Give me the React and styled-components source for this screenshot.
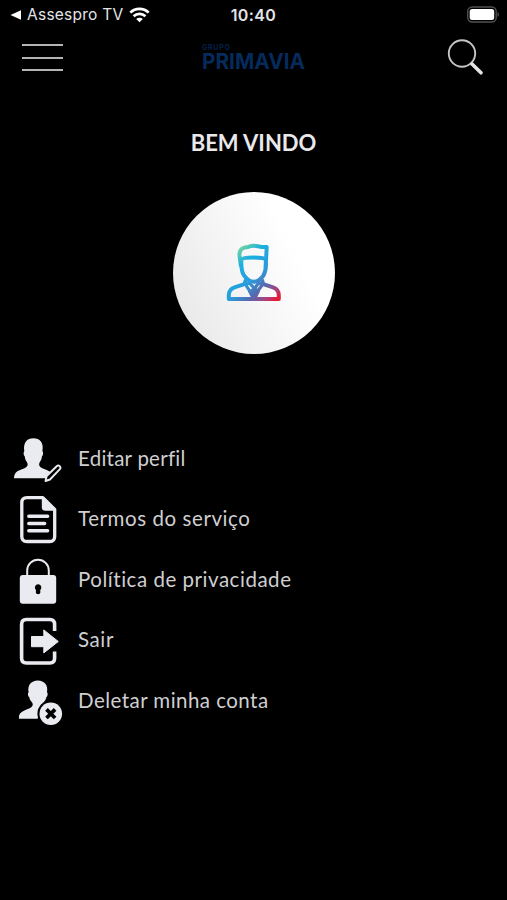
import React from 'react'
import styled, { createGlobalStyle } from 'styled-components'

const GlobalStyle = createGlobalStyle`
    body {
        margin: 0;
        background: #000;
    }
`;

const Screen = styled.div`
    width: 507px;
    height: 900px;
    overflow: hidden;
    display: flex;
    flex-direction: column;
    background: #000;
    color: #cfcfd1;
    font-family: Lato, "Open Sans", sans-serif;
`;

const StatusBar = styled.div`
    height: 30px;
    display: grid;
    grid-template-columns: 1fr 60px 1fr;
    align-items: center;
    box-sizing: border-box;
    padding: 0 8px 0 10px;
    font-family: Inter, sans-serif;
    color: #e4e4e6;
`;

const BackTo = styled.div`
    display: flex;
    align-items: center;
    font-size: 15.5px;
    line-height: 30px;
    letter-spacing: 0.25px;

    span {
        width: 97px;
        margin: 0 5px 0 6px;
        white-space: nowrap;
    }
`;

const Clock = styled.div`
    margin-left: -2px;
    font-size: 16px;
    font-weight: 600;
    line-height: 30px;
    text-align: center;
    letter-spacing: 0.4px;
    white-space: nowrap;
`;

const BatteryIcon = styled.svg`
    justify-self: end;
`;

const Header = styled.header`
    height: 60px;
    display: grid;
    grid-template-columns: 180px 1fr 38px;
    align-items: start;
    box-sizing: border-box;
    padding: 8px 22px 0;
`;

const MenuButton = styled.div`
    width: 41px;
    height: 27px;
    margin-top: 6px;
    display: flex;
    flex-direction: column;
    justify-content: space-between;
`;

const MenuLine = styled.div`
    height: 2px;
    background: #b4b4b4;
`;

const Logo = styled.div`
    width: 104px;
    margin-top: 6px;
    color: #052b5c;
`;

const LogoTop = styled.div`
    height: 8px;
    font: 700 7px/8px Inter, sans-serif;
    letter-spacing: 0.75px;
    opacity: 0.8;
`;

const LogoName = styled.svg`
    display: block;
    overflow: visible;
`;

const Title = styled.h1`
    height: 28px;
    margin: 39px 0 0;
    font-size: 22px;
    font-weight: 700;
    line-height: 28px;
    text-align: center;
    color: #e9e9ec;
`;

const Avatar = styled.div`
    width: 162px;
    height: 162px;
    margin: 35px 0 0 173px;
    border-radius: 50%;
    display: flex;
    align-items: center;
    justify-content: center;
    background: linear-gradient(65deg, #e5e5e5 0%, #f4f4f4 40%, #fff 72%);
`;

const Menu = styled.ul`
    margin: 75px 0 0;
    padding: 0;
    list-style: none;
`;

const MenuItem = styled.li`
    height: 60.5px;
    display: flex;
    align-items: center;
    padding-left: 10px;
`;

const Label = styled.span`
    margin-left: 8px;
    padding-bottom: 3px;
    font-size: 20.5px;
    line-height: 28px;
    letter-spacing: ${props => props.$spacing}px;
    white-space: nowrap;
`;

const ItemIcon = styled.svg`
    width: 60px;
    height: 60px;
    flex: none;
    color: #e9ebf1;
`;

function EditIcon() {
    return (
        <ItemIcon viewBox="0 0 60 60">
            <path fill="currentColor" d="M4 49.300C4 42 9.500 41.300 14.500 39.200c3.200-1.400 4-3.500 2.400-6.200-1.300-1.400-2-3.400-2.100-5.500-1.500-1-1.500-4.500-.5-5.500C13 13.500 17 9.200 23.400 9.200S34 13.500 32.400 22c1 1 1 4.500-.5 5.500-.1 2.100-.8 4.100-2.100 5.500-1.500 2.700-.7 4.800 2.500 6.200 3.400 1.500 6.800 2.400 9.200 4.700l-5.500 5.400z" />
            <path fill="#000" stroke="currentColor" strokeWidth="1.900" strokeLinejoin="round" d="M35.500 52l1.200-5 10-9.800q1.600-1.400 3 0t.2 3L40 50.500z" />
        </ItemIcon>
    )
}

function TermsIcon() {
    return (
        <ItemIcon viewBox="0 0 60 60">
            <path fill="none" stroke="currentColor" strokeWidth="3.300" strokeLinejoin="round" d="M17 7.600h15.800L44.700 19.500V46.500q0 5-5 5H16.800q-5 0-5-5V12.600q0-5 5.200-5z" />
            <path fill="currentColor" d="M31.800 7.600h1.500l11.400 11.900v1.200h-9.500q-3.400 0-3.400-3.400z" />
            <path stroke="currentColor" strokeWidth="3.500" strokeLinecap="round" d="M18.800 26.300h18.800M18.800 33.400h15.800M18.800 40.700h18.800" />
        </ItemIcon>
    )
}

function LockIcon() {
    return (
        <ItemIcon viewBox="0 0 60 60">
            <path fill="none" stroke="currentColor" strokeWidth="2" d="M17.200 27V20.500a10.800 10.800 0 0 1 21.600 0V27" />
            <rect x="9.800" y="25" width="36.400" height="28.800" rx="3" fill="currentColor" />
            <path fill="#000" d="M28.100 34.200a3.300 3.300 0 0 1 2.200 5.700v2.900q0 1.400-2.200 1.400t-2.200-1.400v-2.900a3.300 3.300 0 0 1 2.200-5.700z" />
        </ItemIcon>
    )
}

function ExitIcon() {
    return (
        <ItemIcon viewBox="0 0 60 60">
            <path fill="none" stroke="currentColor" strokeWidth="3.600" d="M44.600 20V13.200q0-4.700-4.700-4.700H16.300q-4.700 0-4.700 4.700V47.300q0 4.700 4.700 4.700H39.900q4.700 0 4.700-4.700V40.500" />
            <path fill="currentColor" stroke="currentColor" strokeWidth="1" strokeLinejoin="round" d="M21.500 25.500h12.300v-6.600L48.300 30.500 33.800 41.900v-6.200H21.500z" />
        </ItemIcon>
    )
}

function DeleteIcon() {
    return (
        <ItemIcon viewBox="0 1 60 60">
            <path fill="currentColor" d="M9 48.700C8.500 42.500 12 41.500 19 38.500c3.500-1.500 5.200-4 2.300-7-1.200-1.400-1.700-2.600-2-4.200-1.600-1-1.700-4-.7-5.200C17.300 15.500 21 10.500 27.800 10.500S38.300 15.500 37 22.100c1 1.200.9 4.200-.7 5.200-.3 1.600-.8 2.800-2 4.200-1.300 1.700-1.500 2.500-.5 4L27.500 48.700z" />
            <circle cx="40.800" cy="43.700" r="13.400" fill="#000" />
            <circle cx="40.800" cy="43.700" r="11.300" fill="currentColor" />
            <path stroke="#000" strokeWidth="3.700" d="M36.500 39.400l8.600 8.600m0-8.600l-8.600 8.600" />
        </ItemIcon>
    )
}

function UserIcon() {
    return (
        <svg width="80" height="75" viewBox="-1 0.5 80 75">
            <defs>
                <linearGradient id="user" gradientUnits="userSpaceOnUse" x1="21" y1="14" x2="65" y2="64">
                    <stop offset="0" stopColor="#78d69b" />
                    <stop offset="0.22" stopColor="#1bb0df" />
                    <stop offset="0.5" stopColor="#2b9bdc" />
                    <stop offset="0.7" stopColor="#5769ae" />
                    <stop offset="0.86" stopColor="#ad3f7c" />
                    <stop offset="0.96" stopColor="#e51b38" />
                </linearGradient>
            </defs>
            <g fill="none" stroke="url(#user)" strokeWidth="4" strokeLinejoin="round">
                <path d="M26 31L24.500 20q-.8-8 8.500-8.500 4-1.800 10-.8 5 1.200 8.700.8l-1 19.500" />
                <path d="M26 24.500q1.500-2.400 12.500-2.400T51.500 24.500" />
                <path d="M26.300 25.500q-.3 10 2.700 14.500Q34 46.300 38.700 46.300t9.600-6.100q3.200-5.500 2.500-14.700" />
                <path d="M31 44l-1.600 4.600-9.900 3.200q-5.700 2-5.700 8v3.700h50v-3.700q0-6-5.700-8L48.300 48.600 46.700 44" />
                <path strokeWidth="3.200" d="M30.500 49l9 14M47.500 49L38 62M30.500 49l4-1.500 5 5.500 4-5.500 4 1.500" />
            </g>
            <path fill="url(#user)" d="M35.500 54l4-3 4 3 1.500 2-4 8h-4l-4-8z" />
        </svg>
    )
}

const items = [
    { text: 'Editar perfil', icon: EditIcon, spacing: 0.25 },
    { text: 'Termos do serviço', icon: TermsIcon, spacing: 0.57 },
    { text: 'Política de privacidade', icon: LockIcon, spacing: 0.53 },
    { text: 'Sair', icon: ExitIcon, spacing: 0.6 },
    { text: 'Deletar minha conta', icon: DeleteIcon, spacing: 0.46 },
]

export default function App() {
    return (
        <>
            <GlobalStyle />
            <Screen>
                <StatusBar>
                    <BackTo>
                        <svg width="11" height="10" viewBox="0 0 11 10">
                            <path fill="#fff" d="M.5 5L11 .2v9.600z" />
                        </svg>
                        <span>Assespro TV</span>
                        <svg width="21" height="16" viewBox="0 0 21 16">
                            <g fill="none" stroke="#fff" strokeWidth="2.700">
                                <path d="M1.300 5.600a13 13 0 0 1 18.400 0" />
                                <path d="M4.600 9.200a8.400 8.400 0 0 1 11.800 0" />
                            </g>
                            <path fill="#fff" d="M10.500 15.300L7.200 12a4.700 4.700 0 0 1 6.600 0z" />
                        </svg>
                    </BackTo>
                    <Clock>10:40</Clock>
                    <BatteryIcon width="33" height="18" viewBox="0 0 33 18">
                        <rect x="1.700" y="1" width="28.500" height="15" rx="4.500" fill="none" stroke="#505050" strokeWidth="1.400" />
                        <rect x="3.700" y="3" width="24.500" height="11" rx="2.500" fill="#fff" />
                        <path fill="#505050" d="M31.500 6q1.500.8 1.500 2.500T31.500 11z" />
                    </BatteryIcon>
                </StatusBar>
                <Header>
                    <MenuButton>
                        <MenuLine />
                        <MenuLine />
                        <MenuLine />
                    </MenuButton>
                    <Logo>
                        <LogoTop>GRUPO</LogoTop>
                        <LogoName width="104" height="18" viewBox="0 0 104 18">
                            <text x="0" y="17" fill="currentColor" fontFamily="Inter, sans-serif" fontSize="21.500" fontWeight="700" textLength="103" lengthAdjust="spacingAndGlyphs">PRIMAVIA</text>
                        </LogoName>
                    </Logo>
                    <svg width="38" height="40" viewBox="0 0 38 40">
                        <circle cx="15" cy="15.500" r="13.200" fill="none" stroke="#c4c4c4" strokeWidth="1.900" />
                        <path stroke="#e4e4e4" strokeWidth="3.600" strokeLinecap="round" d="M25 26l9 8.800" />
                    </svg>
                </Header>
                <Title>BEM VINDO</Title>
                <Avatar>
                    <UserIcon />
                </Avatar>
                <Menu>
                    {items.map(({ text, icon: Icon, spacing }) => (
                        <MenuItem key={text}>
                            <Icon />
                            <Label $spacing={spacing}>{text}</Label>
                        </MenuItem>
                    ))}
                </Menu>
            </Screen>
        </>
    )
}
